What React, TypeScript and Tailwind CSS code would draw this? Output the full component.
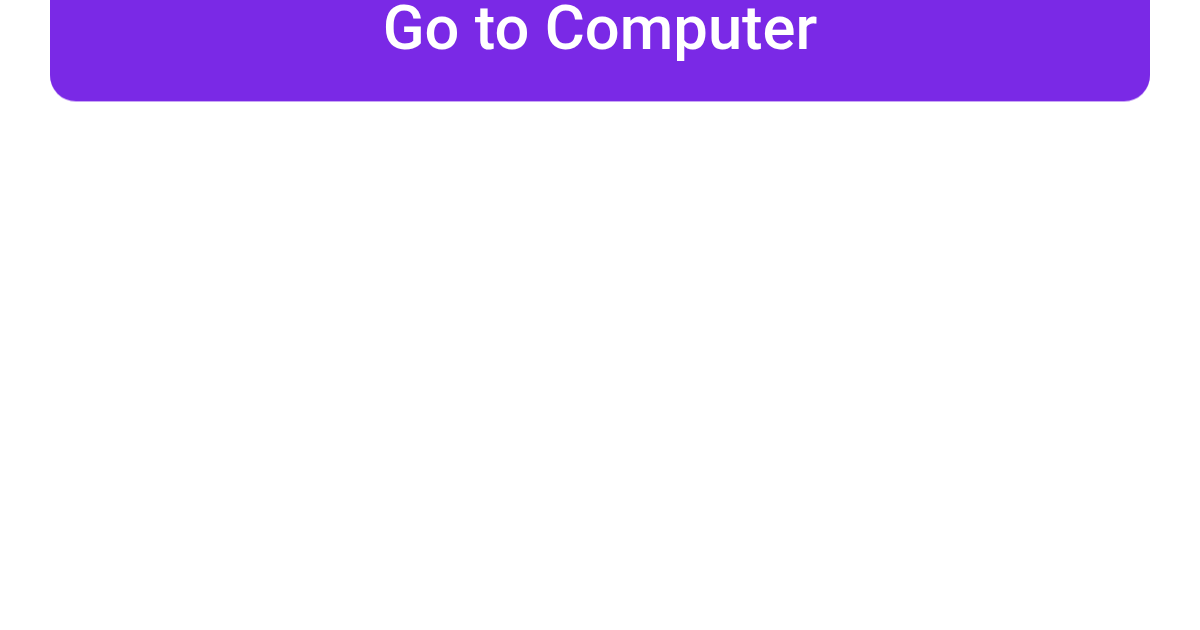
import React from "react";

export default function App() {
  return (
    <div className="w-[1200px] h-[630px] bg-white px-[50px]" style={{ fontFamily: "Roboto, 'Noto Sans', sans-serif" }}>
      <div className="h-[101px] rounded-b-[26px] bg-[#7a29e6] flex justify-center items-start pt-[6px] shadow-[0_1px_0_#c9a6f5]">
        <span className="block text-[61.5px] leading-[44px] text-white font-medium">Go to Computer</span>
      </div>
    </div>
  );
}
